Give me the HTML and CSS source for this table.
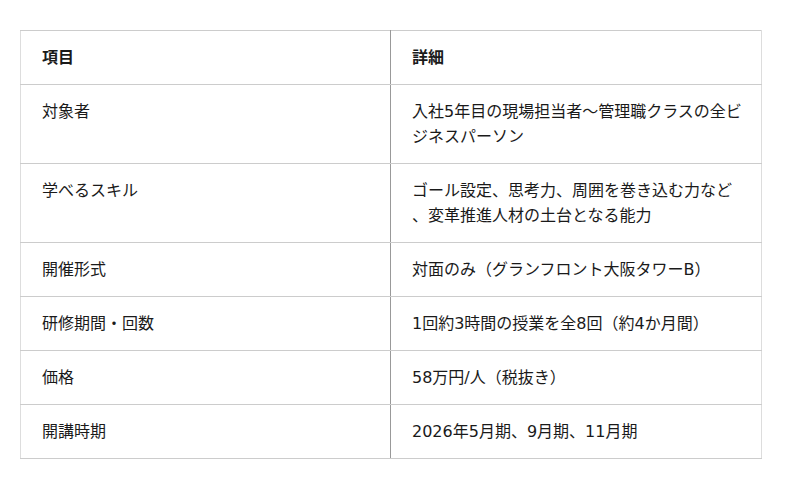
FILE: index.html
```html
<!DOCTYPE html>
<html lang="ja">
<head>
<meta charset="utf-8">
<link rel="stylesheet" href="styles.css">
</head>
<body>
<div class="wrap">
<table class="info">
  <thead>
    <tr><th>項目</th><th>詳細</th></tr>
  </thead>
  <tbody>
    <tr><td>対象者</td><td>入社5年目の現場担当者～管理職クラスの全ビジネスパーソン</td></tr>
    <tr><td>学べるスキル</td><td>ゴール設定、思考力、周囲を巻き込む力など、変革推進人材の土台となる能力</td></tr>
    <tr><td>開催形式</td><td>対面のみ（グランフロント大阪タワーB）</td></tr>
    <tr><td>研修期間・回数</td><td>1回約3時間の授業を全8回（約4か月間）</td></tr>
    <tr><td>価格</td><td>58万円/人（税抜き）</td></tr>
    <tr><td>開講時期</td><td>2026年5月期、9月期、11月期</td></tr>
  </tbody>
</table>
</div>
</body>
</html>
```
FILE: styles.css
```css
html, body {
  margin: 0;
  padding: 0;
  background: #fff;
}
.wrap {
  padding: 30px 38px 30px 20px;
}
.info {
  width: 742px;
  border-collapse: collapse;
  table-layout: fixed;
  font-family: "DejaVu Sans", "Noto Sans CJK JP", sans-serif;
  font-size: 16px;
  line-height: 25px;
  color: #1a1a1a;
  border: 1px solid #ddd;
}
.info th, .info td {
  text-align: left;
  vertical-align: top;
  padding: 14px 14px 14px 21px;
  border-top: 1px solid #ccc;
  border-bottom: 1px solid #ccc;
  line-break: anywhere;
}
.info th {
  font-weight: bold;
}
.info th:first-child, .info td:first-child {
  width: 334px;
  border-right: 1px solid #999;
  border-left: 1px solid #ddd;
}
.info th:last-child, .info td:last-child {
  border-right: 1px solid #ddd;
}
```
